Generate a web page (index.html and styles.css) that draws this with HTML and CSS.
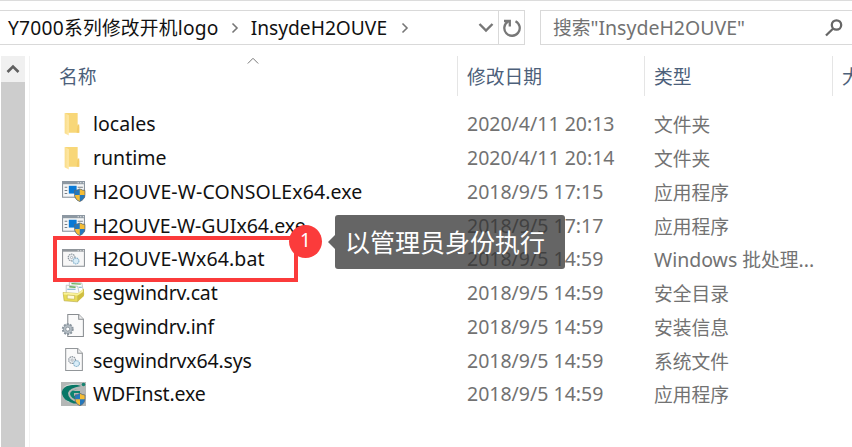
FILE: index.html
```
<!DOCTYPE html>
<html lang="zh-CN">
<head>
<meta charset="utf-8">
<title>InsydeH2OUVE</title>
<link rel="stylesheet" href="styles.css">
</head>
<body>
<svg class="defs" width="0" height="0" aria-hidden="true">
  <defs>
    <linearGradient id="gold" x1="0" x2="1" y1="0" y2="0"><stop offset="0" stop-color="#f9dc88"/><stop offset="1" stop-color="#ffe9a9"/></linearGradient>
    <symbol id="folder" viewBox="0 0 24 24"><path d="M4 1H16V13L17.500 14V20H4Z" fill="#f8d778"/><path d="M16 12H17.500V20H15Z" fill="#f3cc68"/><path d="M3.500 1L7.500 3V22.500L3.500 20.500Z" fill="url(#gold)"/></symbol>
    <symbol id="shield" viewBox="0 0 12 13"><path d="M6 .3Q3.500 2 1 2V6Q1 10.500 6 12.700Q11 10.500 11 6V2Q8.500 2 6 .3Z" fill="#2478bd"/><path d="M6 .3Q8.500 2 11 2V6.300H6Z" fill="#f5bd35"/><path d="M1 6.300H6V12.700Q1.500 10.500 1 6.300Z" fill="#f5bd35"/><path d="M6 .3Q3.500 2 1 2V6Q1 10.500 6 12.700Q11 10.500 11 6V2Q8.500 2 6 .3Z" fill="none" stroke="#626970" stroke-width=".7"/></symbol>
    <symbol id="app" viewBox="0 0 24 24"><rect x="1.500" y="2.500" width="21" height="15" fill="#f5f6f7" stroke="#87919a"/><path d="M1 2H23V5H1Z" fill="#8d98a2"/><path d="M16 3.500H17M18.500 3.500H19.500M21 3.500H22" stroke="#fff"/><path d="M3.500 8H6M3.500 11H6M3.500 14H6M16 8H21" stroke="#777f86"/><rect x="7.500" y="6.500" width="7.500" height="7.500" fill="#0879d6"/><use href="#shield" x="12" y="9" width="12" height="13"/></symbol>
    <symbol id="gears" viewBox="0 0 12 11"><circle cx="4.300" cy="4.200" r="3" fill="#eef1f3" stroke="#8d969e" stroke-width="1.100" stroke-dasharray="1.300 .6"/><circle cx="4.300" cy="4.200" r="1" fill="#fff" stroke="#9ca4ab" stroke-width=".7"/><circle cx="8.200" cy="7.300" r="2.600" fill="#d9edf8" stroke="#8bb4cc" stroke-width="1" stroke-dasharray="1.300 .5"/></symbol>
    <symbol id="batch" viewBox="0 0 24 24"><rect x="1.500" y="2.500" width="21" height="16" fill="#f7f7f7" stroke="#8d9297"/><path d="M1 2H23V4.500H1Z" fill="#90969b"/><path d="M16 3.500H17M18.500 3.500H19.500M21 3.500H22" stroke="#fff"/><use href="#gears" x="5.500" y="5.500" width="13" height="12"/></symbol>
    <symbol id="catalog" viewBox="0 0 24 24"><path d="M8 1L20 2 22 13 8 11Z" fill="#fff" stroke="#afb4b8" stroke-width=".7"/><path d="M5 4L16 5 18 14 5 12Z" fill="#fafafa" stroke="#afb4b8" stroke-width=".7"/><path d="M10 2.500L19 3M8 5.500L14 6" stroke="#68ac5b" stroke-width="1.300"/><path d="M6 8H14M17 6H20" stroke="#6caccb"/><path d="M2 11L16 12V20L3 19Z" fill="#e9dc55" stroke="#b7a94a" stroke-width=".6"/><path d="M16 12L22 7.500V14.500L16 20Z" fill="#d0bf40"/><path d="M2.500 11L16 12 21 8V10.500L16 14 2.500 13Z" fill="#f9f29b"/><path d="M6 13.500L13 14V17.500L6 17Z" fill="#fffadb" stroke="#b4a545" stroke-width=".5"/></symbol>
    <symbol id="setup" viewBox="0 0 24 24"><path d="M6.500 .5H17L21.500 5V21.500H6.500Z" fill="#fafafa" stroke="#898d91"/><path d="M17 .5V5H21.500" fill="#eee" stroke="#898d91"/><circle cx="6.500" cy="14.500" r="4.600" fill="#9aa4ac" stroke="#8a959e" stroke-width="2.200" stroke-dasharray="1.800 1.090"/><circle cx="6.500" cy="14.500" r="3.800" fill="#b4bdc4"/><circle cx="6.500" cy="14.500" r="1.900" fill="#fff" stroke="#7f8991" stroke-width=".7"/></symbol>
    <symbol id="system" viewBox="0 0 24 24"><path d="M4.500 .5H16L20.500 5V21.500H4.500Z" fill="#fafafa" stroke="#929699"/><path d="M16 .5V5H20.500" fill="#eee" stroke="#929699"/><use href="#gears" x="6" y="7" width="13" height="12"/></symbol>
    <symbol id="insyde" viewBox="0 0 25 25"><rect width="25" height="24" fill="#b4b7b6"/><path d="M20 4Q13 1 6 4Q0 7 1 12Q3 19 11 21Q15 22 18 21Q7 18 7 11Q8 6 20 4Z" fill="#087766"/><path d="M18 7Q9 8 9 12Q10 17 17 18V14H13V11H19V9H12Q13 8 18 7Z" fill="#0b8370"/><path d="M1 6Q8 0 20 3Q8 2 1 6M2 15Q6 20 13 21L7 20Z" fill="#d9e5df"/><circle cx="22.500" cy="2.500" r="1.800" fill="#168371"/><use href="#shield" x="13" y="11" width="12" height="13"/></symbol>
  </defs>
</svg>
<main class="window">
  <div class="toolbar">
    <div class="address">
      <span class="crumb"><span class="latin">Y7000</span>系列修改开机<span class="latin">logo</span></span>
      <svg class="sep" viewBox="0 0 8 12"><path d="M1.500 1.500L6 6L1.500 10.500"/></svg>
      <span class="crumb folder-name latin">InsydeH2OUVE</span>
      <svg class="sep" viewBox="0 0 8 12"><path d="M1.500 1.500L6 6L1.500 10.500"/></svg>
      <svg class="dropdown" viewBox="0 0 16 12"><path d="M1.500 2L8 8.500L14.500 2"/></svg>
      <div class="refresh"><svg viewBox="0 0 20 20"><path d="M13.500 3.200A7.700 7.700 0 1 1 6 3.500M2 3H7.800V8.500"/></svg></div>
    </div>
    <div class="search"><span>搜索<span class="latin">"InsydeH2OUVE"</span></span><svg viewBox="0 0 20 20"><circle cx="12.500" cy="7" r="4.700"/><path d="M9.200 10.500L2 17.500"/></svg></div>
  </div>
  <div class="content">
    <div class="scrollbar"><div class="scroll-up"><svg viewBox="0 0 14 10"><path d="M1.500 8L7 2.500L12.500 8"/></svg></div><div class="thumb"></div></div>
    <div class="listing">
      <div class="header">
        <div class="cell name">名称<svg class="sort" viewBox="0 0 12 8"><path d="M.8 6.500L6 1.300L11.200 6.500"/></svg></div>
        <div class="cell">修改日期</div><div class="cell">类型</div><div class="cell">大小</div>
      </div>
      <div class="rows">
        <div class="row"><svg><use href="#folder"/></svg><span class="file latin">locales</span><span class="date latin">2020/4/11 20:13</span><span class="type">文件夹</span></div>
        <div class="row"><svg><use href="#folder"/></svg><span class="file latin">runtime</span><span class="date latin">2020/4/11 20:14</span><span class="type">文件夹</span></div>
        <div class="row"><svg><use href="#app"/></svg><span class="file upper latin">H2OUVE-W-CONSOLEx64.exe</span><span class="date latin">2018/9/5 17:15</span><span class="type">应用程序</span></div>
        <div class="row"><svg><use href="#app"/></svg><span class="file latin">H2OUVE-W-GUIx64.exe</span><span class="date latin">2018/9/5 17:17</span><span class="type">应用程序</span></div>
        <div class="row"><svg><use href="#batch"/></svg><span class="file upper latin">H2OUVE-Wx64.bat</span><span class="date latin">2018/9/5 14:59</span><span class="type"><span class="latin">Windows </span>批处理<span class="latin">...</span></span></div>
        <div class="row"><svg><use href="#catalog"/></svg><span class="file lower latin">segwindrv.cat</span><span class="date latin">2018/9/5 14:59</span><span class="type">安全目录</span></div>
        <div class="row"><svg><use href="#setup"/></svg><span class="file lower latin">segwindrv.inf</span><span class="date latin">2018/9/5 14:59</span><span class="type">安装信息</span></div>
        <div class="row"><svg><use href="#system"/></svg><span class="file lower latin">segwindrvx64.sys</span><span class="date latin">2018/9/5 14:59</span><span class="type">系统文件</span></div>
        <div class="row"><svg><use href="#insyde"/></svg><span class="file lower latin">WDFInst.exe</span><span class="date latin">2018/9/5 14:59</span><span class="type">应用程序</span></div>
      </div>
    </div>
  </div>
  <div class="highlight"></div>
  <div class="badge">1</div>
  <div class="callout">以管理员身份执行</div>
</main>
</body>
</html>
```
FILE: styles.css
```
* { box-sizing: border-box; }
body { margin: 0; background: #fff; }
svg { display: block; flex: none; fill: none; }
.defs { position: absolute; }
.window {
  position: relative;
  width: 852px;
  height: 447px;
  overflow: hidden;
  border-top: 1px solid #dcdcdc;
  font: 18.75px/26px "Noto Sans CJK SC", sans-serif;
  white-space: nowrap;
  color: #111;
}
.latin { font-family: "Noto Sans", sans-serif; font-size: 19.5px; }
.toolbar { display: flex; gap: 15px; padding-top: 9px; height: 44px; }
.address {
  display: flex;
  flex: none;
  align-items: center;
  width: 525px;
  height: 35px;
  padding-left: 8px;
  border: 1px solid #d9d9d9;
  border-left: 0;
}
.crumb:first-child { letter-spacing: .23px; }
.address .latin { font-size: 19.2px; }
.folder-name { width: 137px; }
.sep { width: 8px; height: 12px; margin: 0 12px 0 12px; stroke: #777; stroke-width: 1.6; }
.folder-name + .sep { margin-left: 13px; }
.dropdown { width: 16px; height: 12px; margin-left: auto; margin-right: 4px; stroke: #777; stroke-width: 2.4; }
.refresh { width: 26px; height: 33px; border-left: 1px solid #d9d9d9; display: grid; place-items: center; }
.refresh svg { width: 20px; height: 20px; stroke: #777; stroke-width: 2.3; }
.search {
  display: flex;
  align-items: center;
  justify-content: space-between;
  flex: 1;
  height: 35px;
  padding: 0 8px 0 12px;
  border: 1px solid #d9d9d9;
  border-right: 0;
  color: #727272;
}
.search svg { width: 20px; height: 20px; stroke: #666; stroke-width: 2.3; }
.content { display: flex; height: 391px; margin-top: 11px; }
.scrollbar { flex: none; width: 25px; padding-left: 1px; }
.scroll-up { height: 26px; background: #f0f0f0; display: grid; place-items: center; }
.scroll-up svg { width: 14px; height: 10px; stroke: #606060; stroke-width: 2.6; }
.thumb { height: 365px; background: #cdcdcd; }
.listing { flex: 1; min-width: 0; margin-left: 4px; border-left: 1px solid #f2f2f2; }
.header { display: grid; grid-template-columns: 428px 187px 188px 80px; height: 40px; color: #4c607a; }
.cell { padding: 7px 0 0 9px; border-right: 1px solid #e5e5e5; }
.cell.name { position: relative; padding-left: 29px; }
.sort { position: absolute; left: 217px; top: 1px; width: 12px; height: 8px; stroke: #777; }
.rows { padding-top: 11.600px; }
.row { display: grid; grid-template-columns: 32px 374px 187px 190px; align-items: center; height: 33.750px; padding-left: 31px; }
.row svg { width: 25px; height: 25px; }
.upper { letter-spacing: .12px; }
.lower { letter-spacing: -.15px; }
.date, .type { color: #727272; }
.highlight { position: absolute; left: 53px; top: 235px; width: 245px; height: 46px; border: 4px solid #fb3b3b; }
.badge {
  position: absolute;
  left: 289px;
  top: 224px;
  width: 33px;
  height: 33px;
  border-radius: 50%;
  background: #fb3b3b;
  color: #fff;
  font: 19px/31px "Noto Sans", sans-serif;
  text-align: center;
}
.callout {
  position: absolute;
  left: 335px;
  top: 214px;
  width: 230px;
  height: 54px;
  padding-left: 10px;
  border-radius: 3px;
  background: rgba(50, 50, 50, .75);
  color: #fff;
  font-size: 25px;
  line-height: 53px;
}
.callout::before {
  content: "";
  position: absolute;
  left: -7px;
  top: 20px;
  border: solid transparent;
  border-width: 7px 7px 7px 0;
  border-right-color: rgba(50, 50, 50, .75);
}
```
